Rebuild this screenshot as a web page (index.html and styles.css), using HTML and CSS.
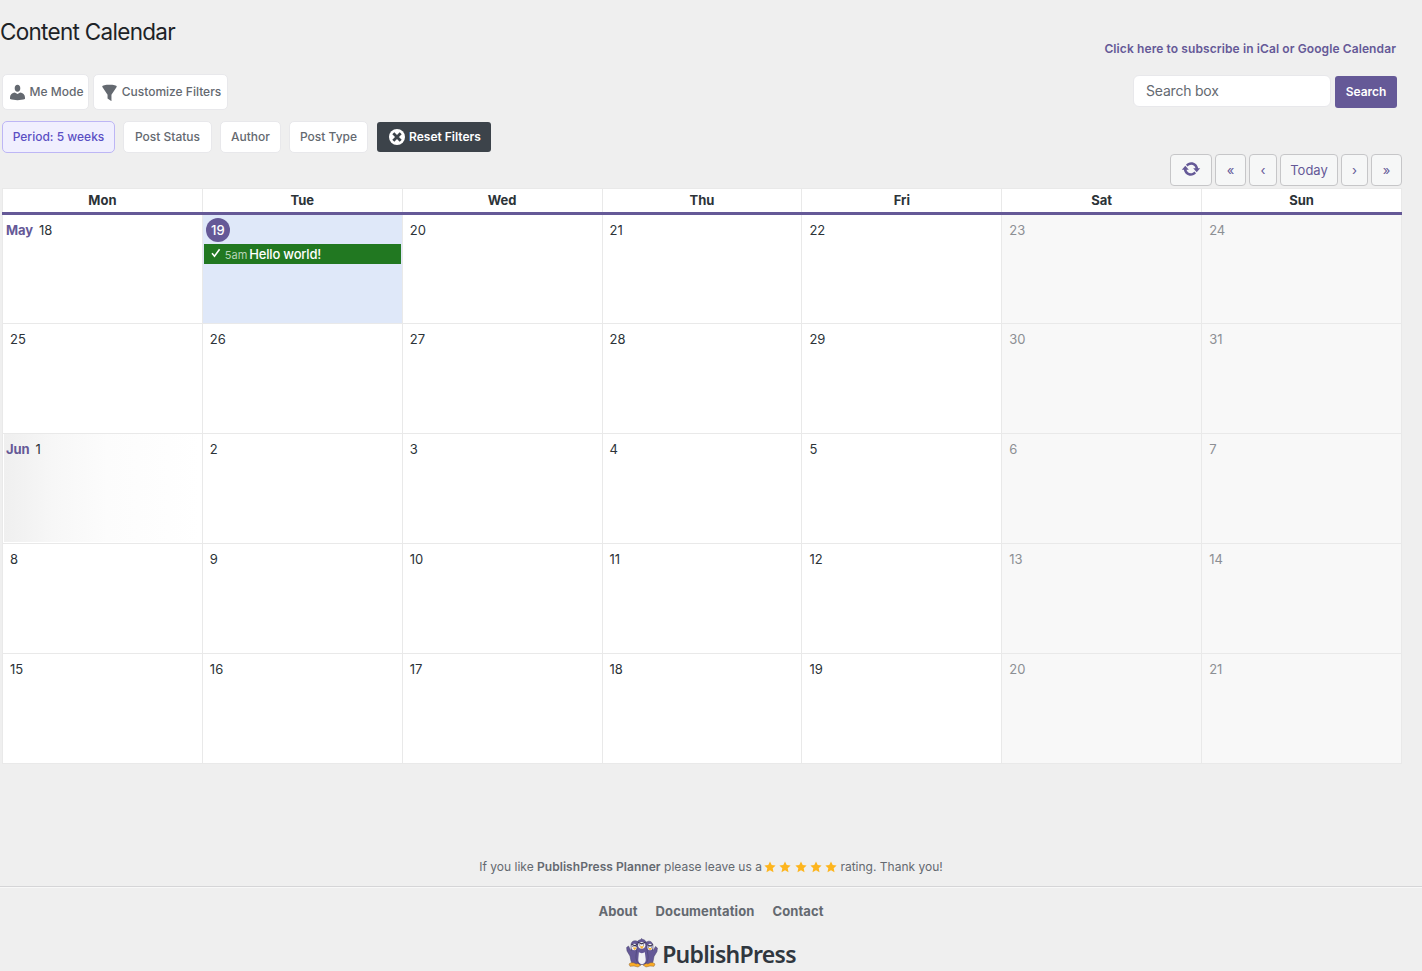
FILE: index.html
```html
<!DOCTYPE html>
<html lang="en">
<head>
    <meta charset="UTF-8">
    <meta name="viewport" content="width=device-width, initial-scale=1.0">
    <title>Content Calendar</title>
    <link rel="stylesheet" href="styles.css">
</head>
<body>
    <header class="header">
        <div class="header-left">
            <h1>Content Calendar</h1>
            <div class="modes">
                <button class="mode me-mode">
                    <svg class="icon" viewBox="0 0 20 20"><path d="M10 9.200c-2.100 0-3.300-2-3.300-4.300C6.700 2.500 8 1 10 1s3.300 1.500 3.300 3.900c0 2.300-1.200 4.300-3.300 4.300zM6.800 10L10 11.800l3.200-1.800c3 .3 5.600 2.600 5.600 5.500v2.200c-2.500 1-5.700 1.300-8.800 1.300s-6.300-.3-8.800-1.300v-2.200c0-2.900 2.600-5.200 5.600-5.500z"/></svg>
                    <span>Me Mode</span>
                </button>
                <button class="mode customize">
                    <svg class="icon" viewBox="0 0 20 20"><path d="M1.500 2.800C1.500 1.500 5.300.8 10 .8s8.500.7 8.500 2c0 .4-.2.900-.5 1.400L12.300 12.500v7.700L7.700 17v-4.500L2 4.200c-.3-.5-.5-1-.5-1.400z"/></svg>
                    <span>Customize Filters</span>
                </button>
            </div>
            <div class="filters">
                <button class="filter period active"><span>Period: 5 weeks</span></button>
                <button class="filter status"><span>Post Status</span></button>
                <button class="filter author"><span>Author</span></button>
                <button class="filter type"><span>Post Type</span></button>
                <button class="filter reset">
                    <svg class="reset-icon" viewBox="0 0 16 16"><circle cx="8" cy="8" r="8" fill="#fff"/><path d="M4.300 4.300l7.400 7.400M11.700 4.300l-7.400 7.400" stroke="#3c434a" stroke-width="2.800"/></svg>
                    <span>Reset Filters</span>
                </button>
            </div>
        </div>
        <div class="header-right">
            <a class="subscribe">Click here to subscribe in iCal or Google Calendar</a>
            <div class="search">
                <input type="text" class="search-input" placeholder="Search box">
                <button class="search-btn"><span>Search</span></button>
            </div>
        </div>
    </header>

    <nav class="calendar-nav">
        <button class="nav-btn refresh">
            <svg viewBox="0 0 20 20"><path d="M10.200 3.280c3.530 0 6.430 2.610 6.920 6h2.080l-3.500 4-3.500-4h2.320c-.45-1.970-2.210-3.450-4.320-3.450-1.450 0-2.730.71-3.540 1.780L4.950 5.660C6.230 4.200 8.110 3.280 10.200 3.280zM9.800 16.720c-3.520 0-6.430-2.610-6.920-6H.8l3.500-4 3.500 4H5.480c.45 1.970 2.210 3.450 4.320 3.450 1.450 0 2.730-.71 3.540-1.780l1.710 1.950C13.770 15.800 11.890 16.720 9.800 16.720z"/></svg>
        </button>
        <button class="nav-btn first">«</button>
        <button class="nav-btn prev">‹</button>
        <button class="nav-btn today-btn">Today</button>
        <button class="nav-btn next">›</button>
        <button class="nav-btn last">»</button>
    </nav>

    <main class="calendar">
        <div class="week-head">
            <div class="week names">
                <div>Mon</div>
                <div>Tue</div>
                <div>Wed</div>
                <div>Thu</div>
                <div>Fri</div>
                <div>Sat</div>
                <div>Sun</div>
            </div>
        </div>
        <div class="week first-week">
            <div class="day with-month"><b>May</b>18</div>
            <div class="day today">
                <span class="today-number">19</span>
                <div class="event">
                    <svg class="check" viewBox="0 0 10 10"><path d="M1 5.200l2.500 3L8.600 1.200" fill="none" stroke="#fff" stroke-width="1.600"/></svg>
                    <span class="event-time">5am</span>
                    <span class="event-title">Hello world!</span>
                </div>
            </div>
            <div class="day">20</div>
            <div class="day">21</div>
            <div class="day">22</div>
            <div class="day weekend">23</div>
            <div class="day weekend">24</div>
        </div>
        <div class="week">
            <div class="day">25</div>
            <div class="day">26</div>
            <div class="day">27</div>
            <div class="day">28</div>
            <div class="day">29</div>
            <div class="day weekend">30</div>
            <div class="day weekend">31</div>
        </div>
        <div class="week">
            <div class="day with-month new-month"><b>Jun</b>1</div>
            <div class="day">2</div>
            <div class="day">3</div>
            <div class="day">4</div>
            <div class="day">5</div>
            <div class="day weekend">6</div>
            <div class="day weekend">7</div>
        </div>
        <div class="week">
            <div class="day">8</div>
            <div class="day">9</div>
            <div class="day">10</div>
            <div class="day">11</div>
            <div class="day">12</div>
            <div class="day weekend">13</div>
            <div class="day weekend">14</div>
        </div>
        <div class="week">
            <div class="day">15</div>
            <div class="day">16</div>
            <div class="day">17</div>
            <div class="day">18</div>
            <div class="day">19</div>
            <div class="day weekend">20</div>
            <div class="day weekend">21</div>
        </div>
    </main>

    <footer class="footer">
        <div class="rating">
            <span>If you like <b>PublishPress Planner</b> please leave us a</span>
            <span class="stars">
                <svg viewBox="0 0 12 12"><path d="M6 .5l1.700 3.600 3.900.5-2.900 2.700.8 3.900L6 9.300l-3.500 1.900.8-3.900L.4 4.600l3.900-.5z"/></svg>
                <svg viewBox="0 0 12 12"><path d="M6 .5l1.700 3.600 3.900.5-2.900 2.700.8 3.900L6 9.300l-3.500 1.900.8-3.900L.4 4.600l3.900-.5z"/></svg>
                <svg viewBox="0 0 12 12"><path d="M6 .5l1.700 3.600 3.900.5-2.900 2.700.8 3.900L6 9.300l-3.500 1.900.8-3.900L.4 4.600l3.900-.5z"/></svg>
                <svg viewBox="0 0 12 12"><path d="M6 .5l1.700 3.600 3.900.5-2.900 2.700.8 3.900L6 9.300l-3.500 1.900.8-3.900L.4 4.600l3.900-.5z"/></svg>
                <svg viewBox="0 0 12 12"><path d="M6 .5l1.700 3.600 3.900.5-2.900 2.700.8 3.900L6 9.300l-3.500 1.900.8-3.900L.4 4.600l3.900-.5z"/></svg>
            </span>
            <span>rating. Thank you!</span>
        </div>
        <div class="footer-links">
            <a class="about">About</a>
            <a class="docs">Documentation</a>
            <a class="contact">Contact</a>
        </div>
        <div class="logo">
            <!-- three penguins -->
            <svg class="penguins" viewBox="0 0 32 30">
                <g fill="#655997" stroke="#45406a" stroke-width=".5">
                    <path d="M5 13L2.500 8 .6 9.500 1 13l3 5 1 5c.7 3 3 4 6 4h3V6C12 1.500 5 1.500 5 7z"/>
                    <path d="M27 13l2.500-4.500 1.900 1.500-.4 3.500-3 5-1 5c-.7 3-3 3.500-5 3.500h-3V6c2-4.500 8-3.500 8 2z"/>
                </g>
                <ellipse cx="8.200" cy="9" rx="2.800" ry="3.200" fill="#f1f1f4"/>
                <ellipse cx="24" cy="9" rx="2.600" ry="3.200" fill="#f1f1f4"/>
                <path d="M3 26c2-2 5-1.500 7 0l2-.5 3 1.500-3 2-4-1-4 .3zM29 26c-2-2-5-1.500-7 0l-2-.5-3 1.500 3 2 4-1 4 .3z" fill="#fcad25" stroke="#8a6335" stroke-width=".5"/>
                <path d="M11 10C10.500 3.500 12 2 14.500 1.700L15.500.5l1.300 1C20 2 21 4.500 20.700 10l1.300 7c.7 5.500-1.500 9.500-6 9.500S9.500 22.500 10 17z" fill="#655997" stroke="#45406a" stroke-width=".5"/>
                <ellipse cx="15.700" cy="7.300" rx="3.600" ry="3.400" fill="#f1f1f4"/>
                <path d="M12.900 14c1 1.500 4.900 1.500 5.900 0l.9 7c.3 3.500-1.600 5-3.700 5s-4-1.500-3.700-5z" fill="#f1f1f4"/>
                <path d="M5.500 6.300l3.500 1.500 2.500-1.500M12 4.300l3.700 1.500 3.800-1.500M21.500 6.800l2.500 1.300 3-1.500" fill="none" stroke="#393451" stroke-width="1.100"/>
                <path d="M6.500 8.500h.8M9.800 8.500h.8M13.400 7h.8M17.200 7h.8M22.200 9h.8M25.200 9h.8" stroke="#302c44" stroke-width="1.200"/>
                <path d="M6.700 9.600h4l-2 2.600zM13.500 8.200H18l-2.200 2.900zM22 10h4l-2 2.400z" fill="#fcb32c"/>
            </svg>
            <span class="logo-text">PublishPress</span>
        </div>
    </footer>
</body>
</html>
```
FILE: styles.css
```css
/* styles.css */
* {
    box-sizing: border-box;
}

body {
    margin: 0;
    height: 971px;
    overflow: hidden;
    background-color: #efefef;
    color: #2c3338;
    font-family: Inter, "Liberation Sans", sans-serif;
    font-size: 13px;
}

button {
    font-family: inherit;
    padding: 0;
    display: flex;
    align-items: center;
    justify-content: center;
    white-space: nowrap;
    border: none;
}

.header {
    display: flex;
    justify-content: space-between;
    height: 154px;
}

h1 {
    margin: 0;
    padding-top: 17px;
    height: 74px;
    font-size: 22.5px;
    line-height: 30px;
    font-weight: 400;
    letter-spacing: -0.7px;
    color: #1d2327;
}

.modes {
    display: flex;
    gap: 4px;
    padding-left: 2px;
}

.mode {
    height: 36px;
    gap: 4px;
    background-color: #fff;
    border: 1px solid #e8e8eb;
    border-radius: 5px;
    color: #646970;
    font-size: 12px;
    font-weight: 500;
}

.mode span,
.filter span,
.search-btn span {
    padding-bottom: 2px;
}

.me-mode {
    width: 87px;
    padding-left: 1px;
}

.customize {
    width: 135px;
    padding-left: 1px;
}

.icon {
    width: 17px;
    height: 17px;
    fill: #646970;
}

.filters {
    display: flex;
    padding: 11px 0 0 2px;
}

.filter {
    height: 32px;
    background-color: #fff;
    border: 1px solid #e8e8eb;
    border-radius: 5px;
    color: #646970;
    font-size: 12px;
    font-weight: 500;
}

.period {
    width: 113px;
    margin-right: 8px;
}

.status {
    width: 89px;
    margin-right: 8px;
}

.author {
    width: 61px;
    margin-right: 8px;
}

.type {
    width: 79px;
    margin-right: 9px;
}

.active {
    background-color: #f0effe;
    border-color: #bdb6f5;
    color: #5b4fc4;
}

.reset {
    width: 114px;
    height: 30px;
    margin-top: 1px;
    padding-left: 2px;
    gap: 4px;
    border: none;
    border-radius: 3px;
    background-color: #3c434a;
    color: #fff;
    font-weight: 600;
}

.reset-icon {
    width: 16px;
    height: 16px;
}

.header-right {
    display: flex;
    flex-direction: column;
    align-items: flex-end;
    padding: 39px 25px 0 0;
}

.subscribe {
    height: 36px;
    line-height: 20px;
    padding-right: 1px;
    font-size: 12px;
    font-weight: 600;
    letter-spacing: 0.1px;
    color: #655997;
    white-space: nowrap;
}

.search {
    display: flex;
    gap: 4px;
}

.search-input {
    width: 198px;
    height: 32px;
    padding: 0 12px 2px;
    border: 1px solid #e8e8eb;
    border-radius: 6px;
    background-color: #fff;
    font-family: inherit;
    font-size: 14px;
    letter-spacing: -0.2px;
}

.search-input::placeholder {
    color: #646970;
}

.search-btn {
    width: 62px;
    height: 32px;
    margin-top: 1px;
    border-radius: 3px;
    background-color: #655997;
    color: #fff;
    font-size: 12px;
    font-weight: 600;
}

.calendar-nav {
    display: flex;
    justify-content: flex-end;
    gap: 3px;
    padding-right: 20px;
}

.nav-btn {
    width: 31px;
    height: 32px;
    background-color: #f6f7f7;
    border: 1px solid #c6c6c8;
    border-radius: 4px;
    color: #655997;
    font-size: 13px;
}

.refresh {
    width: 42px;
}

.refresh svg {
    width: 20px;
    height: 20px;
    margin-bottom: 3px;
    fill: #655997;
}

.prev {
    width: 28px;
}

.today-btn {
    width: 58px;
}

.next {
    width: 27px;
}

.calendar {
    width: 1400px;
    margin: 2px 0 0 2px;
}

.week {
    display: grid;
    grid-template-columns: repeat(7, 1fr);
    height: 110px;
    border-right: 1px solid #e9e9e9;
}

.first-week {
    height: 109px;
}

.week > div {
    background-color: #fff;
    border-left: 1px solid #e9e9e9;
    border-bottom: 1px solid #e9e9e9;
}

.week-head {
    border-bottom: 3px solid #655997;
}

.names {
    height: 24px;
    font-weight: 700;
    text-align: center;
    line-height: 23px;
}

.names > div {
    border-bottom: none;
    border-top: 1px solid #e9e9e9;
}

.week .day {
    padding: 7px 0 0 7px;
    line-height: 16px;
}

.week .with-month {
    padding-left: 3px;
}

.with-month b {
    margin-right: 6px;
    color: #655997;
    font-weight: 700;
    letter-spacing: -0.1px;
}

.week .new-month {
    background: linear-gradient(to right, #efefef, #f7f7f7 25%, #fcfcfc 52%, #fff) content-box, #fff;
    padding: 0 1px 1px 1px;
}

.new-month::before {
    content: "";
    display: block;
    height: 7px;
}

.new-month b {
    margin-left: 2px;
}

.week .weekend {
    background-color: #f8f8f8;
    color: #8c8f94;
}

.week .today {
    padding: 3px 1px 0;
    background-color: #dfe8f9;
}

.today-number {
    display: block;
    width: 24px;
    height: 24px;
    margin-left: 2px;
    border-radius: 50%;
    background-color: #655997;
    color: #fff;
    line-height: 24px;
    text-align: center;
    font-weight: 500;
}

.event {
    display: flex;
    align-items: center;
    height: 20px;
    margin-top: 2px;
    padding-left: 7px;
    background-color: #217821;
    color: #fff;
}

.check {
    width: 10px;
    height: 10px;
    margin: 0 4px 3px 0;
}

.event-time {
    margin-right: 2px;
    padding-top: 2px;
    font-size: 11px;
    color: #b8d5b8;
}

.event-title {
    font-weight: 500;
    letter-spacing: -0.2px;
}

.footer {
    padding-top: 93px;
    color: #646970;
}

.rating {
    display: flex;
    justify-content: center;
    align-items: center;
    height: 30px;
    padding-bottom: 11px;
    border-bottom: 1px solid #d5d5d7;
    box-shadow: 0 1px 0 #f8f8f8;
    font-size: 12px;
}

.rating b {
    font-weight: 600;
    letter-spacing: 0.05px;
}

.stars {
    display: flex;
    gap: 3.4px;
    margin: 1px 3px 0 2px;
}

.stars svg {
    width: 12px;
    height: 12px;
    fill: #fdb51e;
}

.footer-links {
    display: flex;
    justify-content: center;
    gap: 18px;
    padding-top: 15px;
    font-weight: 700;
    line-height: 18px;
    letter-spacing: 0.1px;
}

.logo {
    display: flex;
    justify-content: center;
    margin-top: 18px;
}

.penguins {
    width: 32px;
    height: 30px;
}

.logo-text {
    margin-left: 4px;
    color: #30373f;
    font-family: "Noto Sans", "Open Sans", sans-serif;
    font-size: 23px;
    font-weight: 600;
    line-height: 32px;
    letter-spacing: -0.7px;
}
```
